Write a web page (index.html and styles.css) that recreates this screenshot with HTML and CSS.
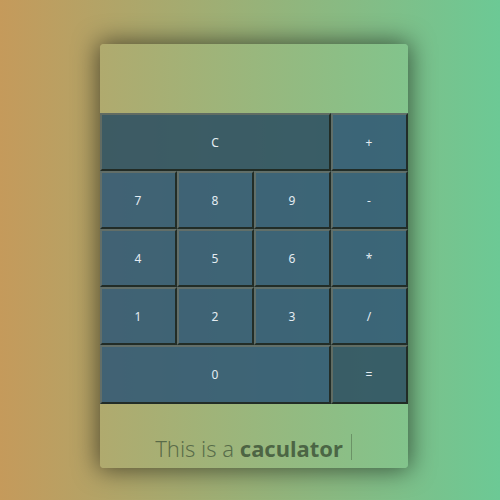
FILE: index.html
```html
<!DOCTYPE html>
<html>
<head>
<meta charset="utf-8">
<link rel="stylesheet" href="styles.css">
</head>
<body>
<div class="calc">
  <div class="display"></div>
  <div class="keys">
    <button class="key wide dark">C</button>
    <button class="key">+</button>
    <button class="key">7</button>
    <button class="key">8</button>
    <button class="key">9</button>
    <button class="key">-</button>
    <button class="key">4</button>
    <button class="key">5</button>
    <button class="key">6</button>
    <button class="key">*</button>
    <button class="key">1</button>
    <button class="key">2</button>
    <button class="key">3</button>
    <button class="key">/</button>
    <button class="key wide">0</button>
    <button class="key dark">=</button>
  </div>
  <div class="caption">
    <span class="light">This is a </span><span class="bold">caculator</span><span class="cursor"></span>
  </div>
</div>
</body>
</html>
```
FILE: styles.css
```css
html, body {
  margin: 0;
  padding: 0;
}
body {
  width: 500px;
  height: 500px;
  background: linear-gradient(to right, #c59a5b, #6cc995);
  font-family: "Noto Sans", "Open Sans", sans-serif;
  display: flex;
  justify-content: center;
  align-items: flex-start;
  overflow: hidden;
}
.calc {
  margin-top: 44px;
  margin-left: 7px;
  width: 308px;
  height: 424px;
  border-radius: 4px;
  background: linear-gradient(to right, #b0aa6e, #82c48c);
  box-shadow: 0 0 24px 2px rgba(0, 0, 0, 0.55);
  display: flex;
  flex-direction: column;
  overflow: hidden;
}
.display {
  height: 69px;
}
.keys {
  display: grid;
  grid-template-columns: repeat(4, 77px);
  grid-template-rows: 58px 58px 58px 58px 59px;
}
.key {
  margin: 0;
  padding: 0;
  font-family: "Noto Sans", "Open Sans", sans-serif;
  font-size: 12px;
  color: #e4ecf2;
  background: rgba(46, 86, 116, 0.86);
  border-style: solid;
  border-width: 2px;
  border-color: rgba(118, 118, 100, 0.65) rgba(30, 36, 26, 0.85) rgba(30, 36, 26, 0.85) rgba(118, 118, 100, 0.65);
}
.key.wide {
  grid-column: span 3;
}
.key.dark {
  background: rgba(46, 80, 98, 0.88);
}
.caption {
  flex: 1;
  display: flex;
  align-items: flex-end;
  justify-content: center;
  padding-bottom: 5px;
  font-size: 22px;
  color: rgba(60, 80, 55, 0.72);
}
.light {
  font-weight: 300;
  white-space: pre;
}
.bold {
  font-weight: 700;
  color: rgba(60, 82, 55, 0.82);
}
.cursor {
  display: inline-block;
  width: 1px;
  height: 26px;
  margin-left: 8px;
  margin-bottom: 3px;
  background: rgba(60, 80, 55, 0.4);
}
```
